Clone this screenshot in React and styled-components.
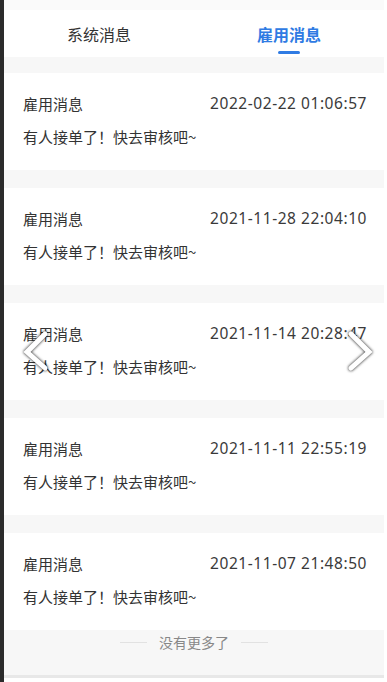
import React from 'react';
import styled, { createGlobalStyle } from 'styled-components';

const GlobalStyle = createGlobalStyle`
  html, body {
    margin: 0;
    padding: 0;
    background: #ffffff;
  }
  body {
    font-family: "Noto Sans CJK SC", "Noto Sans", sans-serif;
    color: #333;
  }
`;

const Page = styled.div`
  position: relative;
  width: 380px;
  height: 682px;
  border-left: 4px solid #2b2b2b;
  background: #f7f7f7;
  overflow: hidden;
  display: flex;
  flex-direction: column;
`;

const TopStrip = styled.div`
  height: 10px;
  background: #fafafa;
`;

const Tabs = styled.div`
  display: grid;
  grid-template-columns: 1fr 1fr;
  height: 47px;
  background: #fff;
  margin-bottom: 16px;
`;

const Tab = styled.div`
  display: flex;
  flex-direction: column;
  align-items: center;
  padding-top: 13px;
  font-size: 16px;
  line-height: 22px;
  color: ${(p) => (p.$active ? '#2f7be3' : '#333')};
  font-weight: ${(p) => (p.$active ? 600 : 400)};
`;

const Underline = styled.span`
  width: 22px;
  height: 3px;
  border-radius: 2px;
  margin-top: 6px;
  background: ${(p) => (p.$show ? '#2f7be3' : 'transparent')};
`;

const List = styled.div`
  display: flex;
  flex-direction: column;
  gap: 18px;
`;

const Card = styled.div`
  background: #fff;
  height: 97px;
  box-sizing: border-box;
  padding: 20px 17px 0 19px;
`;

const Row = styled.div`
  display: flex;
  justify-content: space-between;
  align-items: center;
  height: 20px;
  font-size: 15px;
  color: #333;
`;

const DateText = styled.span`
  font-family: "Noto Sans", sans-serif;
  font-size: 15.5px;
  letter-spacing: 0.55px;
  color: #3a3a3a;
`;

const Body = styled.div`
  margin-top: 14px;
  font-size: 15px;
  line-height: 20px;
  color: #333;
`;

const Footer = styled.div`
  display: flex;
  align-items: center;
  justify-content: center;
  gap: 12px;
  height: 20px;
  margin-top: 2px;
  font-size: 14px;
  color: #888;
`;

const Line = styled.span`
  width: 27px;
  height: 1px;
  background: #e2e2e2;
`;

const Spacer = styled.div`
  flex: 1;
`;

const BottomBar = styled.div`
  height: 4px;
  border-top: 3px solid #e8e8e8;
  background: #fff;
`;

const Arrow = styled.svg`
  position: absolute;
  top: 330px;
  ${(p) => (p.$side === 'left' ? 'left: 16px;' : 'left: 338px;')}
  width: 34px;
  height: 42px;
  filter: drop-shadow(0 0 1.5px rgba(0, 0, 0, 0.7)) drop-shadow(0 0 1px rgba(0, 0, 0, 0.3));
`;

const items = [
  '2022-02-22 01:06:57',
  '2021-11-28 22:04:10',
  '2021-11-14 20:28:47',
  '2021-11-11 22:55:19',
  '2021-11-07 21:48:50',
];

export default function App() {
  return (
    <>
      <GlobalStyle />
      <Page>
        <TopStrip />
        <Tabs>
          <Tab>
            系统消息
            <Underline />
          </Tab>
          <Tab $active>
            雇用消息
            <Underline $show />
          </Tab>
        </Tabs>
        <List>
          {items.map((d) => (
            <Card key={d}>
              <Row>
                <span>雇用消息</span>
                <DateText>{d}</DateText>
              </Row>
              <Body>有人接单了！快去审核吧~</Body>
            </Card>
          ))}
        </List>
        <Footer>
          <Line />
          没有更多了
          <Line />
        </Footer>
        <Spacer />
        <BottomBar />
        <Arrow $side="left" viewBox="0 0 34 42">
          <polyline points="25,4 7,22 25,38" fill="none" stroke="#fff" strokeWidth="5" strokeLinecap="round" strokeLinejoin="miter" />
        </Arrow>
        <Arrow $side="right" viewBox="0 0 34 42">
          <polyline points="9,4 27,22 9,38" fill="none" stroke="#fff" strokeWidth="5" strokeLinecap="round" strokeLinejoin="miter" />
        </Arrow>
      </Page>
    </>
  );
}
